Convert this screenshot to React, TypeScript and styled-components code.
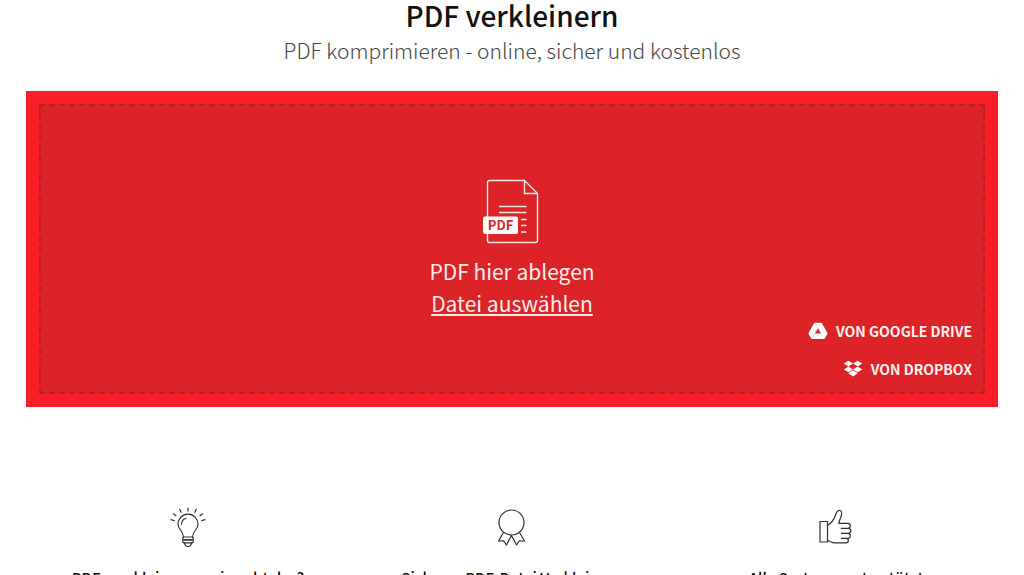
import React from "react";
import styled, { createGlobalStyle } from "styled-components";

const GlobalStyle = createGlobalStyle`
  * { box-sizing: border-box; }
  html { scrollbar-width: none; }
  body {
    margin: 0;
    background: #fff;
    color: #111;
    font-family: "Noto Sans CJK SC", "Noto Sans", sans-serif;
  }
`;

const Page = styled.main`
  padding: 0 26px 40px;
`;

const Header = styled.header`
  text-align: center;
`;

const Title = styled.h1`
  margin: 0;
  font-size: 28px;
  line-height: 30px;
  font-weight: 500;
`;

const Subtitle = styled.p`
  margin: 0;
  font-size: 21px;
  line-height: 40px;
  font-weight: 300;
  color: #444;
`;

const DropFrame = styled.section`
  margin-top: 21px;
  padding: 12px;
  background: #fa1f27;
  border: 1px solid #ea1f27;
`;

const DropZone = styled.div`
  display: flex;
  flex-direction: column;
  align-items: center;
  padding: 73px 11px 11px;
  background: #db2328;
  border: 2px dashed #b92026;
  color: #ffeceb;
`;

const DropText = styled.p`
  margin: 10px 0 0;
  font-size: 21px;
  line-height: 32px;
`;

const FileButton = styled.button`
  padding: 0;
  border: 0;
  background: none;
  color: inherit;
  font: inherit;
  font-size: 21px;
  line-height: 32px;
  text-decoration: underline;
  text-decoration-thickness: 2px;
  text-underline-offset: 2px;
  cursor: pointer;
`;

const Sources = styled.div`
  align-self: flex-end;
  display: flex;
  flex-direction: column;
  align-items: flex-end;
  gap: 14px;
`;

const SourceButton = styled.button`
  display: flex;
  align-items: center;
  gap: 8px;
  padding: 0;
  border: 0;
  background: none;
  color: #fff0ef;
  font: inherit;
  font-size: 14px;
  line-height: 24px;
  font-weight: 700;
  text-transform: uppercase;
  cursor: pointer;
`;

const Features = styled.section`
  display: grid;
  grid-template-columns: repeat(3, 1fr);
  margin-top: 99px;
`;

const Feature = styled.article`
  display: flex;
  flex-direction: column;
  align-items: center;
`;

const FeatureTitle = styled.h2`
  margin: 18px 0 0;
  font-size: 15px;
  line-height: 24px;
  font-weight: 500;
`;

const PdfLabel = styled.text`
  font-family: "Noto Sans CJK SC", sans-serif;
  font-size: 13px;
  font-weight: 700;
  fill: #db2328;
`;

const PdfIcon = () => (
  <svg width="62" height="66" viewBox="0 0 62 66" fill="none" stroke="#ffe9e8" strokeWidth="1.4" aria-hidden="true">
    <path d="M6.500 3.500q0-2 2-2H43.500L56.500 14.500V61.500q0 2-2 2H8.500q-2 0-2-2Z" strokeLinejoin="round" />
    <path d="M43.500 1.500V14.500H56.500" />
    <path d="M18 27.500H45.500M18 33.500H45.500M40 40.500H45.500M40 46.500H45.500M40 53H45.500" />
    <rect x="2" y="37.500" width="35" height="17.500" rx="2" fill="#fff" stroke="none" />
    <PdfLabel x="19.500" y="51" textAnchor="middle" stroke="none">PDF</PdfLabel>
  </svg>
);

const DriveIcon = () => (
  <svg width="20" height="18" viewBox="0 0 20 18" fill="#fff" aria-hidden="true">
    <path
      fillRule="evenodd"
      d="M7 .8h6q.7 0 1.100.7l5.200 9.300q.4.800 0 1.500l-2.400 4q-.4.700-1.200.7H4.300q-.8 0-1.200-.7l-2.400-4q-.4-.7 0-1.500L5.900 1.500Q6.300.8 7 .8ZM10 6.200 6.900 11.600h6.200Z"
    />
    <path d="M7.200 1.200 13 11.500M13.200 11.600H6.600L3.600 16.600M10 6.200 6.900 11.600" fill="none" stroke="#e89a9c" strokeWidth=".5" />
  </svg>
);

const DropboxIcon = () => (
  <svg width="20" height="18" viewBox="0 0 20 18" fill="#fff" aria-hidden="true">
    <path d="M5.400.8 10 3.600 5.400 6.400.8 3.600ZM14.600.8 19.200 3.600 14.600 6.400 10 3.600ZM5.400 6.600 10 9.400 5.400 12.200.8 9.400ZM14.600 6.600 19.200 9.400 14.600 12.200 10 9.400ZM10 10.300 14.700 13.200 10 16.500 5.300 13.200Z" />
  </svg>
);

const LineIcon = styled.svg`
  width: 42px;
  height: 42px;
  fill: none;
  stroke: #303030;
  stroke-width: 1.2;
  stroke-linecap: round;
  stroke-linejoin: round;
`;

const BulbIcon = () => (
  <LineIcon viewBox="0 0 42 42" aria-hidden="true">
    <path d="M16.500 31c-.2-3-1.300-4.800-3-7C11.900 22 11 20.300 11 18.200a10 10 0 0 1 20 0c0 2.100-.9 3.800-2.500 5.800-1.700 2.200-2.800 4-3 7" />
    <path d="M14.500 18.300c.2-3 2-5.200 4.600-6" />
    <rect x="15.800" y="31" width="10.400" height="2.800" rx="1" />
    <rect x="15.800" y="33.800" width="10.400" height="3" rx="1" />
    <path d="M17.500 36.800q.3 3.700 3.500 3.700t3.500-3.700" />
    <path d="M21 2v3M12.700 3.300l1.400 2.900M29.300 3.300l-1.400 2.900M6.400 7.600l2.500 2.200M35.600 7.600l-2.500 2.200M4 13.600l3.500 1.200M38 13.600l-3.500 1.200" />
  </LineIcon>
);

const AwardIcon = () => (
  <LineIcon viewBox="0 0 42 42" aria-hidden="true">
    <circle cx="20.500" cy="16.500" r="12.500" />
    <path d="M12.500 26.500 7.500 35 12.700 34.800 15.500 39 20.500 29.500M28.500 26.500 33.500 35 28.300 34.800 25.500 39 20.500 29.500" />
  </LineIcon>
);

const ThumbIcon = () => (
  <LineIcon viewBox="0 0 42 42" aria-hidden="true">
    <path d="M5 15.500H12.500V36H5Z" />
    <path d="M12.500 19.500q5.500-3.500 8-10.300c.9-2.600 1.600-4.800 3.700-4.800 2.400 0 2.900 2.300 2.300 4.700-.7 2.900-2.200 5.300-2.700 8.200h9a2.500 2.500 0 0 1 0 5h-6.500 7a2.500 2.500 0 0 1 0 5h-7 6.500a2.500 2.500 0 0 1 0 5h-6.500 4.800a2.200 2.200 0 0 1 0 4.500H19.500c-3 0-4-1.800-7-2.300" />
  </LineIcon>
);

const sources = [
  { label: "von Google Drive", Icon: DriveIcon },
  { label: "von Dropbox", Icon: DropboxIcon },
];

const features = [
  { title: "PDFs verkleinern – wie geht das?", Icon: BulbIcon },
  { title: "Sicheres PDF-Datei Verkleinern", Icon: AwardIcon },
  { title: "Alle Systeme unterstützt", Icon: ThumbIcon },
];

export default function App() {
  return (
    <>
      <GlobalStyle />
      <Page lang="de">
        <Header>
          <Title>PDF verkleinern</Title>
          <Subtitle>PDF komprimieren - online, sicher und kostenlos</Subtitle>
        </Header>
        <DropFrame>
          <DropZone>
            <PdfIcon />
            <DropText>PDF hier ablegen</DropText>
            <FileButton type="button">Datei auswählen</FileButton>
            <Sources>
              {sources.map(({ label, Icon }) => (
                <SourceButton type="button" key={label}>
                  <Icon />
                  {label}
                </SourceButton>
              ))}
            </Sources>
          </DropZone>
        </DropFrame>
        <Features>
          {features.map(({ title, Icon }) => (
            <Feature key={title}>
              <Icon />
              <FeatureTitle>{title}</FeatureTitle>
            </Feature>
          ))}
        </Features>
      </Page>
    </>
  );
}
